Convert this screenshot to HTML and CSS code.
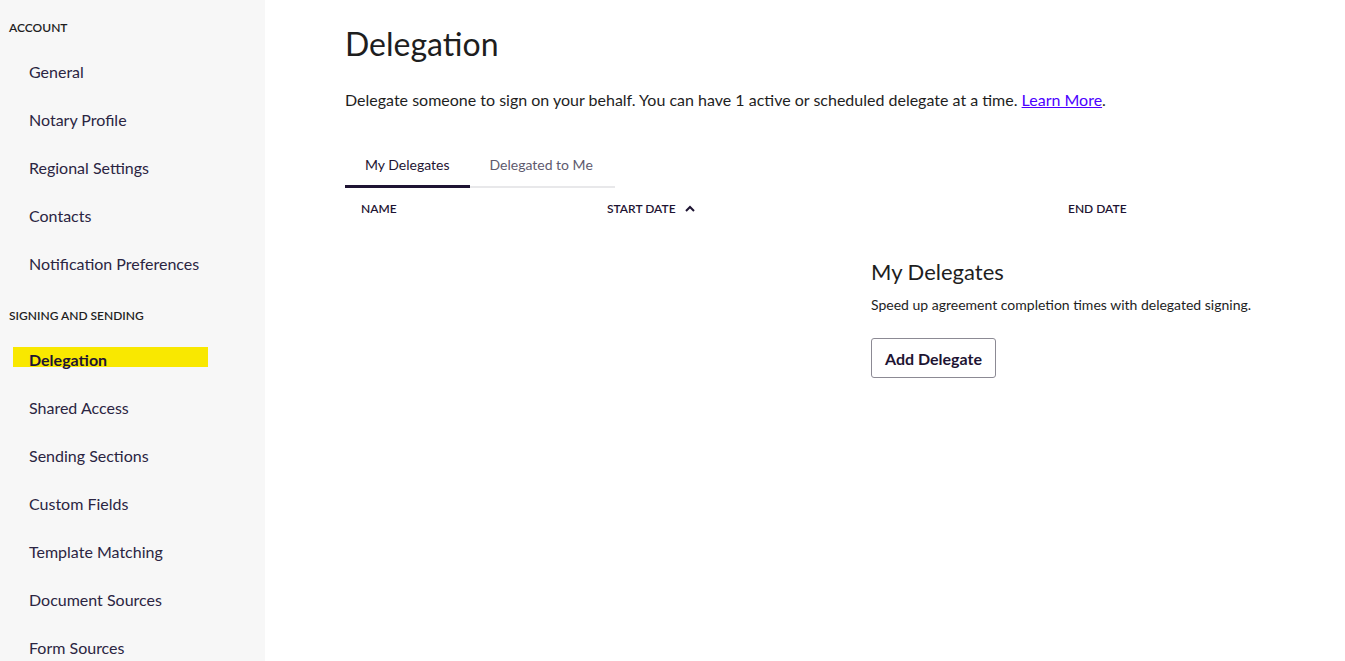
FILE: index.html
```html
<!DOCTYPE html>
<html>
<head>
<meta charset="utf-8">
<link rel="stylesheet" href="styles.css">
</head>
<body>
<div class="app">
  <nav class="sidebar">
    <div class="section-title first">ACCOUNT</div>
    <a class="nav-item">General</a>
    <a class="nav-item">Notary Profile</a>
    <a class="nav-item">Regional Settings</a>
    <a class="nav-item">Contacts</a>
    <a class="nav-item">Notification Preferences</a>
    <div class="section-title">SIGNING AND SENDING</div>
    <a class="nav-item active"><span class="hl">Delegation</span></a>
    <a class="nav-item">Shared Access</a>
    <a class="nav-item">Sending Sections</a>
    <a class="nav-item">Custom Fields</a>
    <a class="nav-item">Template Matching</a>
    <a class="nav-item">Document Sources</a>
    <a class="nav-item">Form Sources</a>
  </nav>
  <main class="main">
    <h1 class="title">Delegation</h1>
    <p class="desc">Delegate someone to sign on your behalf. You can have 1 active or scheduled delegate at a time. <a class="link">Learn More</a>.</p>
    <div class="tabs">
      <div class="tab active">My Delegates</div>
      <div class="tab">Delegated to Me</div>
    </div>
    <div class="thead">
      <div class="th">NAME</div>
      <div class="th">START DATE <svg class="caret" width="10" height="7" viewBox="0 0 10 7"><path d="M1 6 L5 2 L9 6" fill="none" stroke="#1e1433" stroke-width="2"/></svg></div>
      <div class="th">END DATE</div>
    </div>
    <div class="empty">
      <h2 class="empty-title">My Delegates</h2>
      <p class="empty-text">Speed up agreement completion times with delegated signing.</p>
      <button class="btn">Add Delegate</button>
    </div>
  </main>
</div>
</body>
</html>
```
FILE: styles.css
```css
* { box-sizing: border-box; }
html, body { margin: 0; padding: 0; height: 100%; }
body {
  font-family: Lato, "Noto Sans", sans-serif;
  background: #fff;
  color: #1e1e1e;
  overflow: hidden;
}
.app { display: flex; height: 661px; overflow: hidden; }
.sidebar {
  width: 265px;
  flex-shrink: 0;
  background: #f7f7f7;
  display: flex;
  flex-direction: column;
  padding-top: 20px;
  overflow: hidden;
}
.section-title {
  flex-shrink: 0;
  font-size: 12px;
  font-weight: 600;
  color: #1e1e1e;
  padding-left: 9px;
  height: 16px;
  line-height: 16px;
  margin-top: 20px;
  margin-bottom: 12px;
}
.section-title.first { margin-top: 0; }
.nav-item {
  flex-shrink: 0;
  display: block;
  font-size: 16px;
  color: #2b2542;
  height: 48px;
  line-height: 48px;
  padding-left: 29px;
  position: relative;
}
.nav-item.active { font-weight: 700; color: #1e1433; }
.nav-item .hl { position: relative; z-index: 1; }
.nav-item.active::before {
  content: "";
  position: absolute;
  left: 13px;
  top: 11px;
  width: 195px;
  height: 20px;
  background: #f9e800;
}
.main {
  flex: 1;
  padding-left: 80px;
  padding-top: 25px;
}
.title {
  margin: 0;
  font-size: 32px;
  font-weight: 400;
  line-height: 38px;
  color: #1e1e1e;
}
.desc {
  margin: 25px 0 0;
  font-size: 16px;
  line-height: 24px;
  color: #1e1e1e;
}
.link { color: #4c00ff; text-decoration: underline; }
.tabs {
  display: flex;
  margin-top: 33px;
  width: 270px;
  border-bottom: 2px solid #e8e8ea;
}
.tab {
  font-size: 14px;
  height: 43px;
  line-height: 40px;
  padding: 0 20px;
  color: #5e5a6e;
  margin-bottom: -2px;
  border-bottom: 2px solid transparent;
}
.tab.active {
  color: #1e1433;
  border-bottom: 3px solid #1e1433;
}
.thead {
  display: grid;
  grid-template-columns: 246px 461px 1fr;
  height: 41px;
  align-items: center;
}
.th {
  font-size: 12px;
  font-weight: 600;
  color: #1e1433;
  padding-left: 16px;
  display: flex;
  align-items: center;
}
.caret { margin-left: 9px; }
.empty {
  padding-left: 526px;
  padding-top: 28px;
}
.empty-title {
  margin: 0;
  font-size: 22px;
  font-weight: 400;
  line-height: 30px;
  color: #1e1e1e;
}
.empty-text {
  margin: 8px 0 0;
  font-size: 14px;
  line-height: 20px;
  color: #1e1e1e;
}
.btn {
  margin-top: 23px;
  height: 40px;
  padding: 0 13px;
  font-family: inherit;
  font-size: 16px;
  font-weight: 700;
  color: #1e1433;
  background: #fff;
  border: 1px solid #8c8a94;
  border-radius: 3px;
}
```
